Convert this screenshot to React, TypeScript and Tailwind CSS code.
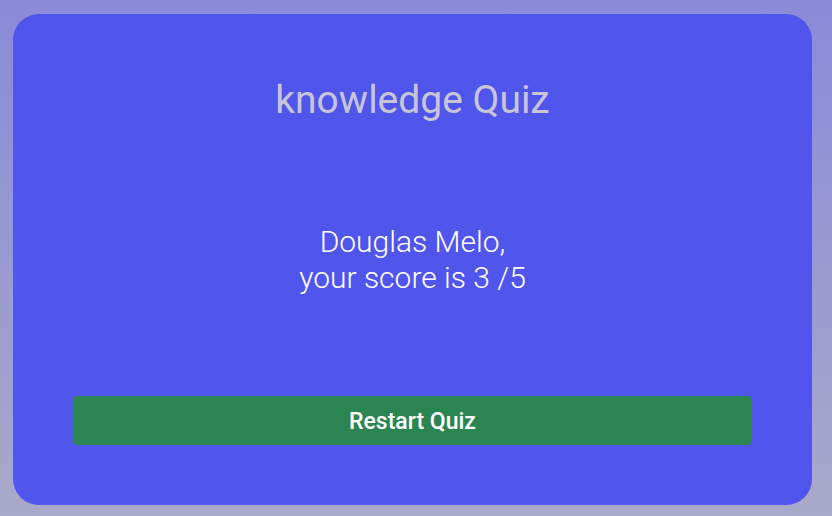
export default function App() {
  return (
    <div
      className="w-[832px] h-[516px] bg-gradient-to-b from-[#8a8ad9] to-[#a9a9c9] pt-[14px] pl-[13px]"
      style={{ fontFamily: "Roboto, 'Liberation Sans', sans-serif" }}
    >
      <div className="w-[799px] h-[491px] rounded-[26px] bg-[#5055eb] p-[60px] flex flex-col items-center">
        <h1 className="text-[39px] leading-[52px] text-[#c6c6d6] font-normal">knowledge Quiz</h1>
        <div className="mt-[98px] text-[30px] leading-[36px] font-light text-white text-center">
          <p>Douglas Melo,</p>
          <p>your score is 3 /5</p>
        </div>
        <button className="mt-auto w-full h-[49px] pt-[3px] rounded-[4px] bg-[#2a8552] text-white text-[23px] font-medium">
          Restart Quiz
        </button>
      </div>
    </div>
  );
}
